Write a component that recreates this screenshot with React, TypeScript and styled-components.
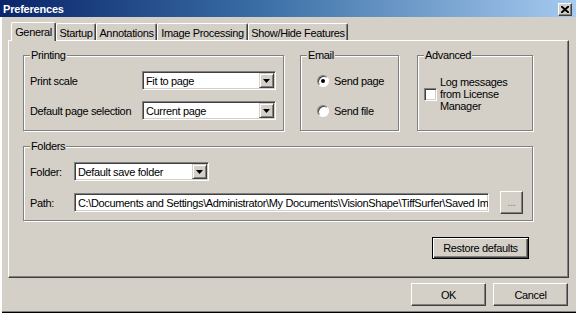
import React from 'react';
import styled, { createGlobalStyle } from 'styled-components';

const Global = createGlobalStyle`
  body {
    margin: 0;
    background: #d4d0c8;
    font-family: "Liberation Sans", Arial, sans-serif;
    font-size: 11px;
    letter-spacing: -0.35px;
    color: #000;
  }
  * { box-sizing: border-box; }
`;

const tabs = [
  { label: 'General', width: 45, active: true },
  { label: 'Startup', width: 40 },
  { label: 'Annotations', width: 61 },
  { label: 'Image Processing', width: 91 },
  { label: 'Show/Hide Features', width: 100 },
];

const Arrow = () => (
  <svg width="7" height="4" viewBox="0 0 7 4">
    <path d="M0 0h7L3.5 4z" fill="#000" />
  </svg>
);

const Select = ({ value, width }: { value: string; width: number }) => (
  <SelectBox style={{ width }}>
    <SelectText>{value}</SelectText>
    <DropButton>
      <Arrow />
    </DropButton>
  </SelectBox>
);

const App = () => {
  return (
    <>
      <Global />
      <Window>
        <TitleBar>
          <Title>Preferences</Title>
          <CloseButton>
            <svg width="8" height="7" viewBox="0 0 8 7">
              <path d="M0 0l8 7M8 0L0 7" stroke="#000" strokeWidth="2" />
            </svg>
          </CloseButton>
        </TitleBar>

        <TabStrip>
          {tabs.map((t) => (
            <Tab key={t.label} $active={!!t.active} style={{ width: t.width }}>
              {t.label}
            </Tab>
          ))}
        </TabStrip>

        <Panel>
          <TopRow>
            <Group $width={261}>
              <Legend>Printing</Legend>
              <FieldRow $gap={9}>
                <Label $width={112}>Print scale</Label>
                <Select value="Fit to page" width={134} />
              </FieldRow>
              <FieldRow $gap={11}>
                <Label $width={112}>Default page selection</Label>
                <Select value="Current page" width={134} />
              </FieldRow>
            </Group>

            <Group $width={99}>
              <Legend>Email</Legend>
              <RadioList>
                <RadioRow>
                  <Radio $checked />
                  Send page
                </RadioRow>
                <RadioRow>
                  <Radio />
                  Send file
                </RadioRow>
              </RadioList>
            </Group>

            <Group $width={116} style={{ marginLeft: 2 }}>
              <Legend>Advanced</Legend>
              <CheckRow>
                <CheckBox />
                <CheckText>Log messages from License Manager</CheckText>
              </CheckRow>
            </Group>
          </TopRow>

          <Group $width={510} $height={81} style={{ marginTop: 9 }}>
            <Legend>Folders</Legend>
            <FieldRow $gap={9}>
              <Label $width={44}>Folder:</Label>
              <Select value="Default save folder" width={135} />
            </FieldRow>
            <FieldRow $gap={10}>
              <Label $width={44}>Path:</Label>
              <PathInput>
                C:\Documents and Settings\Administrator\My Documents\VisionShape\TiffSurfer\Saved Im
              </PathInput>
              <SmallButton>...</SmallButton>
            </FieldRow>
          </Group>

          <RestoreRow>
            <DefaultButton>Restore defaults</DefaultButton>
          </RestoreRow>
        </Panel>

        <Footer>
          <Button>OK</Button>
          <Button>Cancel</Button>
        </Footer>
      </Window>
    </>
  );
};

const Window = styled.div`
  width: 576px;
  height: 313px;
  display: flex;
  flex-direction: column;
  background: #d4d0c8;
  box-shadow: inset 2px 0 0 #fff, inset 0 -1px 0 #000, inset 0 -2px 0 #808080;
`;

const TitleBar = styled.div`
  height: 17px;
  display: flex;
  align-items: center;
  justify-content: space-between;
  padding: 0 4px 0 3px;
  background: linear-gradient(to right, #0a246a 0%, #3a6ea5 45%, #a6caf0 100%);
`;

const Title = styled.div`
  color: #fff;
  font-weight: bold;
  font-size: 11px;
  letter-spacing: -0.2px;
`;

const CloseButton = styled.div`
  width: 14px;
  height: 13px;
  margin-top: 2px;
  display: flex;
  align-items: center;
  justify-content: center;
  background: #d4d0c8;
  border: 1px solid;
  border-color: #fff #404040 #404040 #fff;
  box-shadow: inset -1px -1px 0 #808080;
`;

const TabStrip = styled.div`
  height: 19px;
  margin-top: 4px;
  padding-left: 11px;
  display: flex;
  align-items: flex-end;
`;

const Tab = styled.div<{ $active: boolean }>`
  height: ${(p) => (p.$active ? 19 : 17)}px;
  display: flex;
  align-items: center;
  justify-content: center;
  padding-top: ${(p) => (p.$active ? 0 : 1)}px;
  border-top: 1px solid #fff;
  border-left: 1px solid #fff;
  border-right: 1px solid #404040;
  box-shadow: inset -1px 0 0 #808080;
  border-radius: 2px 2px 0 0;
  background: #d4d0c8;
  position: relative;
  z-index: ${(p) => (p.$active ? 1 : 0)};
  margin-bottom: ${(p) => (p.$active ? -1 : 0)}px;
  white-space: nowrap;
`;

const Panel = styled.div`
  margin-left: 8px;
  width: 561px;
  height: 238px;
  padding: 8px 0 0 14px;
  border-top: 1px solid #fff;
  border-left: 1px solid #fff;
  border-right: 1px solid #404040;
  border-bottom: 1px solid #404040;
  box-shadow: inset -1px -1px 0 #808080;
`;

const TopRow = styled.div`
  display: flex;
  gap: 16px;
`;

const Group = styled.fieldset<{ $width: number; $height?: number }>`
  width: ${(p) => p.$width}px;
  height: ${(p) => p.$height ?? 82}px;
  margin: 0;
  padding: 0 6px;
  border: 1px solid #808080;
  box-shadow: 1px 1px 0 #fff, inset 1px 1px 0 #fff;
  flex-shrink: 0;
`;

const Legend = styled.legend`
  padding: 0 1px;
  margin-left: 0;
  line-height: 13px;
  background: #d4d0c8;
`;

const FieldRow = styled.div<{ $gap?: number }>`
  display: flex;
  align-items: center;
  margin-top: ${(p) => p.$gap ?? 10}px;
`;

const Label = styled.div<{ $width: number }>`
  width: ${(p) => p.$width}px;
  flex-shrink: 0;
  white-space: nowrap;
`;

const SelectBox = styled.div`
  height: 19px;
  display: flex;
  align-items: stretch;
  background: #fff;
  border: 1px solid;
  border-color: #808080 #fff #fff #808080;
  box-shadow: inset 1px 1px 0 #404040, inset -1px -1px 0 #d4d0c8;
  padding: 1px;
`;

const SelectText = styled.div`
  flex: 1;
  padding-left: 2px;
  display: flex;
  align-items: center;
  white-space: nowrap;
  overflow: hidden;
`;

const DropButton = styled.div`
  width: 15px;
  display: flex;
  align-items: center;
  justify-content: center;
  background: #d4d0c8;
  border: 1px solid;
  border-color: #d4d0c8 #404040 #404040 #d4d0c8;
  box-shadow: inset 1px 1px 0 #fff, inset -1px -1px 0 #808080;
`;

const RadioList = styled.div`
  display: flex;
  flex-direction: column;
  gap: 17px;
  padding: 12px 0 0 10px;
`;

const RadioRow = styled.div`
  display: flex;
  align-items: center;
  gap: 5px;
  height: 13px;
  white-space: nowrap;
`;

const Radio = styled.span<{ $checked?: boolean }>`
  width: 12px;
  height: 12px;
  border-radius: 50%;
  background: #fff;
  border: 1px solid;
  border-color: #808080 #fff #fff #808080;
  box-shadow: inset 1px 1px 0 #404040;
  display: flex;
  align-items: center;
  justify-content: center;
  &::after {
    content: '';
    width: 4px;
    height: 4px;
    border-radius: 50%;
    background: ${(p) => (p.$checked ? '#000' : 'transparent')};
  }
`;

const CheckRow = styled.div`
  display: flex;
  align-items: center;
  gap: 3px;
  padding-top: 14px;
`;

const CheckBox = styled.span`
  width: 13px;
  height: 13px;
  flex-shrink: 0;
  background: #fff;
  border: 1px solid;
  border-color: #808080 #fff #fff #808080;
  box-shadow: inset 1px 1px 0 #404040, inset -1px -1px 0 #d4d0c8;
`;

const CheckText = styled.div`
  width: 76px;
  line-height: 12px;
`;

const PathInput = styled.div`
  width: 415px;
  height: 19px;
  padding: 0 3px;
  display: flex;
  align-items: center;
  background: #fff;
  border: 1px solid;
  border-color: #808080 #fff #fff #808080;
  box-shadow: inset 1px 1px 0 #404040, inset -1px -1px 0 #d4d0c8;
  white-space: nowrap;
  overflow: hidden;
`;

const Button = styled.div`
  width: 75px;
  height: 23px;
  display: flex;
  align-items: center;
  justify-content: center;
  background: #d4d0c8;
  border: 1px solid;
  border-color: #fff #404040 #404040 #fff;
  box-shadow: inset -1px -1px 0 #808080;
  white-space: nowrap;
`;

const SmallButton = styled(Button)`
  width: 23px;
  margin-left: 11px;
  color: #808080;
  padding-bottom: 2px;
`;

const RestoreRow = styled.div`
  display: flex;
  justify-content: flex-end;
  width: 510px;
  padding-right: 4px;
  margin-top: 16px;
`;

const DefaultButton = styled(Button)`
  width: 97px;
  height: 22px;
  border: 1px solid #000;
  box-shadow: inset 1px 1px 0 #fff, inset -1px -1px 0 #404040, inset -2px -2px 0 #808080;
`;

const Footer = styled.div`
  display: flex;
  justify-content: flex-end;
  gap: 7px;
  padding: 5px 8px 0 0;
`;

export default App;
